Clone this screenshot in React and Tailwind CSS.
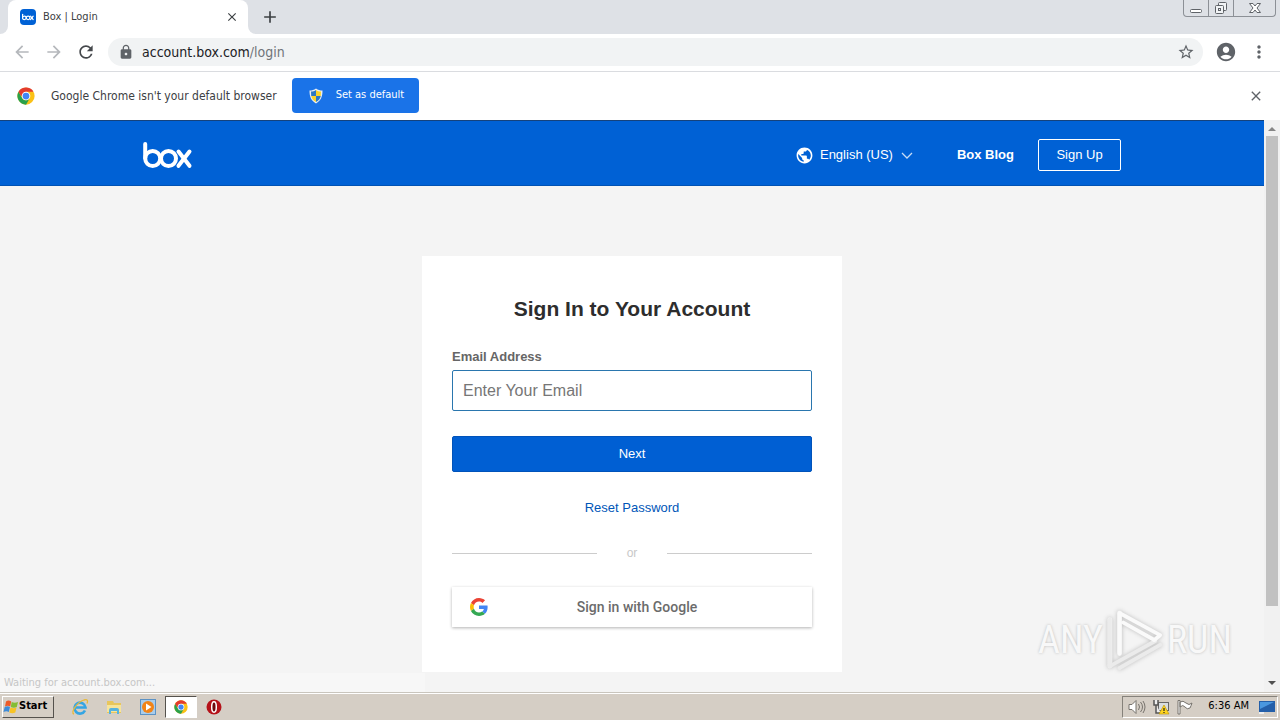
import React from "react";
import {
  MdArrowBack,
  MdArrowForward,
  MdRefresh,
  MdLock,
  MdStarBorder,
  MdAccountCircle,
  MdMoreVert,
  MdClose,
  MdAdd,
  MdPublic,
} from "react-icons/md";

function BoxMark({ className, width = 4 }) {
  return (
    <svg viewBox="0 0 50 28" className={className} fill="none" stroke="currentColor" strokeWidth={width} strokeLinecap="round" aria-label="box" role="img">
      <line x1="2.200" y1="3" x2="2.200" y2="17" />
      <circle cx="9.700" cy="17.500" r="7.500" />
      <circle cx="25.500" cy="17.500" r="7.500" />
      <line x1="35.500" y1="10.500" x2="46.500" y2="24.800" />
      <line x1="46.500" y1="10.500" x2="35.500" y2="24.800" />
    </svg>
  );
}

function ChromeIcon({ className }) {
  return (
    <svg viewBox="0 0 48 48" className={className} aria-hidden="true">
      <circle cx="24" cy="24" r="23" fill="#fbc116" />
      <path d="M4.100 12.500A23 23 0 0 1 43.900 12.500H24A11.500 11.500 0 0 0 14 18.300z" fill="#e33b2e" />
      <path d="M4.100 12.500A23 23 0 0 0 24 47L34 29.700A11.500 11.500 0 0 1 14 29.700z" fill="#2aa14b" />
      <path d="M4.100 12.500H24V24H10.700z" fill="#e33b2e" />
      <circle cx="24" cy="24" r="11.500" fill="#fff" />
      <circle cx="24" cy="24" r="9" fill="#4285f4" />
    </svg>
  );
}

function GoogleIcon({ className }) {
  return (
    <svg viewBox="0 0 48 48" className={className} aria-hidden="true">
      <path fill="#EA4335" d="M24 9.500c3.540 0 6.710 1.220 9.210 3.600l6.850-6.850C35.900 2.380 30.470 0 24 0 14.620 0 6.510 5.380 2.560 13.220l7.980 6.190C12.430 13.720 17.740 9.500 24 9.500z" />
      <path fill="#4285F4" d="M46.980 24.550c0-1.570-.15-3.090-.38-4.550H24v9.020h12.940c-.58 2.960-2.260 5.480-4.780 7.180l7.730 6c4.510-4.180 7.090-10.360 7.090-17.650z" />
      <path fill="#FBBC05" d="M10.530 28.590c-.48-1.450-.76-2.990-.76-4.590s.27-3.140.76-4.590l-7.980-6.190C.92 16.460 0 20.120 0 24c0 3.880.92 7.540 2.560 10.780l7.970-6.190z" />
      <path fill="#34A853" d="M24 48c6.480 0 11.930-2.130 15.890-5.810l-7.730-6c-2.150 1.450-4.920 2.300-8.160 2.300-6.260 0-11.570-4.220-13.470-9.910l-7.980 6.190C6.510 42.620 14.620 48 24 48z" />
    </svg>
  );
}

function ShieldIcon() {
  return (
    <svg viewBox="0 0 16 16" className="size-4" aria-hidden="true">
      <path d="M8 .5C6 2 4 2.500 1.500 2.500c0 6 1.500 10 6.500 13 5-3 6.500-7 6.500-13C12 2.500 10 2 8 .5z" fill="#e9eef2" />
      <path d="M8 2C6.500 3 5 3.500 3 3.600L3.200 8H8z" fill="#2b78c5" />
      <path d="M8 2c1.500 1 3 1.500 5 1.600L12.800 8H8z" fill="#f9d32c" />
      <path d="M3.200 8c.6 2.600 2 4.500 4.800 6V8z" fill="#f9d32c" />
      <path d="M12.800 8c-.6 2.600-2 4.500-4.800 6V8z" fill="#2b78c5" />
    </svg>
  );
}

function TabStrip() {
  return (
    <div className="flex h-[34px] shrink-0 items-start bg-[#dee1e6]">
      <div className="h-full w-2 bg-white">
        <div className="h-full rounded-br-lg bg-[#dee1e6]" />
      </div>
      <div className="flex h-full w-60 items-center rounded-t-lg bg-white pr-2 pl-3">
        <span className="flex size-4 items-center justify-center rounded-sm bg-[#0061d5] text-white">
          <BoxMark className="h-2 w-3" width={5} />
        </span>
        <span className="ml-[7px] flex-1 text-[11px] text-[#3c4043]">Box | Login</span>
        <button aria-label="Close tab" className="flex size-4 items-center justify-center text-[#3c4043]">
          <MdClose className="size-3.5" />
        </button>
      </div>
      <div className="h-full w-2 bg-white">
        <div className="h-full rounded-bl-lg bg-[#dee1e6]" />
      </div>
      <button aria-label="New tab" className="flex h-full w-7 items-center justify-center text-[#3c4043]">
        <MdAdd className="size-5" />
      </button>
      <div className="mr-1 ml-auto flex h-[17px] divide-x divide-[#8c9096] rounded-b border border-t-0 border-[#8c9096] text-[#5f6368]">
        <button aria-label="Minimize" className="flex w-[25px] items-center justify-center">
          <svg viewBox="0 0 14 14" className="size-3.5" fill="#fff" stroke="currentColor" aria-hidden="true">
            <rect x="1.500" y="8.500" width="11" height="3" rx="1" />
          </svg>
        </button>
        <button aria-label="Restore" className="flex w-[25px] items-center justify-center">
          <svg viewBox="0 0 14 14" className="size-3.5" fill="#f1f3f5" stroke="currentColor" aria-hidden="true">
            <rect x="4.500" y="1.500" width="8" height="8" rx="1" />
            <rect x="1.500" y="4.500" width="8" height="8" rx="1" />
            <rect x="4.500" y="7.500" width="2" height="2" />
          </svg>
        </button>
        <button aria-label="Close window" className="flex w-[41px] items-center justify-center">
          <svg viewBox="0 0 14 14" className="size-3.5" fill="#fff" stroke="currentColor" aria-hidden="true">
            <path d="M1.500 2.500h3.500L7 5 9 2.500h3.500L9 7l3.500 4.500H9L7 9l-2 2.500H1.500L5 7z" />
          </svg>
        </button>
      </div>
    </div>
  );
}

function Toolbar() {
  return (
    <div className="flex h-[38px] shrink-0 items-center border-b border-[#dadce0] bg-white pr-[11px] pb-0.5 pl-3">
      <div className="flex items-center gap-3">
        <button aria-label="Back" className="text-[#b5b8bc]"><MdArrowBack className="size-5" /></button>
        <button aria-label="Forward" className="text-[#b5b8bc]"><MdArrowForward className="size-5" /></button>
        <button aria-label="Reload" className="text-[#45484c]"><MdRefresh className="size-5" /></button>
      </div>
      <div className="ml-3 flex h-7 flex-1 items-center rounded-full bg-[#f1f3f4] pr-2 pl-2.5">
        <MdLock className="size-4 text-[#5f6368]" />
        <span className="ml-2 flex-1 text-sm text-[#202124]">
          account.box.com<span className="text-[#70757a]">/login</span>
        </span>
        <button aria-label="Bookmark this page" className="text-[#5f6368]"><MdStarBorder className="size-[18px]" /></button>
      </div>
      <button aria-label="Profile" className="ml-3 text-[#5f6368]"><MdAccountCircle className="size-[22px]" /></button>
      <button aria-label="Menu" className="ml-3 text-[#5f6368]"><MdMoreVert className="size-5" /></button>
    </div>
  );
}

function DefaultBrowserBar() {
  return (
    <div className="flex h-12 shrink-0 items-center bg-white pr-4 pb-px pl-[17px]">
      <ChromeIcon className="size-[18px]" />
      <span className="ml-4 text-xs text-[#3c4043]">Google Chrome isn't your default browser</span>
      <button className="ml-[15px] flex h-[35px] w-[127px] items-center gap-3 rounded bg-[#1a73e8] pl-4 text-[11px] whitespace-nowrap text-white">
        <ShieldIcon />
        Set as default
      </button>
      <button aria-label="Dismiss" className="ml-auto text-[#5f6368]"><MdClose className="size-4" /></button>
    </div>
  );
}

function SiteHeader() {
  return (
    <header className="h-[66px] shrink-0 border-t border-b border-t-[#15427c] border-b-[#0052b4] bg-[#0061d5] font-['Liberation_Sans',Arial,sans-serif] text-[13px] text-white">
      <div className="mx-auto flex h-full max-w-[978px] items-center pt-1">
        <a href="#home" aria-label="Box home"><BoxMark className="h-7 w-[50px]" /></a>
        <button className="ml-auto flex items-center">
          <MdPublic className="mr-1.5 size-[19px]" />
          English (US)
          <svg viewBox="0 0 12 12" className="ml-2 size-3" fill="none" stroke="#c7dcf5" strokeWidth="1.300" aria-hidden="true">
            <path d="M1 4l5 5 5-5" />
          </svg>
        </button>
        <a href="#blog" className="ml-11 font-bold">Box Blog</a>
        <a href="#signup" className="ml-6 flex h-8 w-[83px] items-center justify-center rounded-xs border border-white">Sign Up</a>
      </div>
    </header>
  );
}

function SignInCard() {
  return (
    <main className="mx-auto mt-[70px] flex h-[416px] w-[420px] flex-col bg-white px-[30px] pt-[39px] font-['Liberation_Sans',Arial,sans-serif]">
      <h1 className="text-center text-[21px] leading-7 font-bold text-[#2d2d2d]">Sign In to Your Account</h1>
      <form className="flex flex-col" onSubmit={(e) => e.preventDefault()}>
        <label htmlFor="email" className="mt-6 text-[13px] leading-5 font-bold text-[#666]">Email Address</label>
        <input id="email" type="email" placeholder="Enter Your Email" className="mt-[3px] h-[41px] rounded-xs border border-[#2a76ae] px-2.5 text-base text-[#333] outline-none placeholder:text-[#767676]" />
        <button className="mt-[25px] h-9 rounded-xs border border-[#0053ba] bg-[#005fd3] text-[13px] text-white">Next</button>
      </form>
      <a href="#reset" className="mt-[26px] self-center text-[13px] leading-5 text-[#0056b8]">Reset Password</a>
      <div className="mt-[25px] flex items-center text-xs leading-5 text-[#c8c8c8]">
        <span className="h-px flex-1 bg-[#ccc]" />
        <span className="w-[70px] text-center">or</span>
        <span className="h-px flex-1 bg-[#ccc]" />
      </div>
      <button className="mt-6 flex h-10 items-center bg-white px-[18px] font-['Roboto',sans-serif] text-sm font-medium text-[#6b6b6b] shadow-[0_1px_3px_rgba(0,0,0,0.3)]">
        <GoogleIcon className="size-[18px]" />
        <span className="flex-1 pr-2 text-center">Sign in with Google</span>
      </button>
    </main>
  );
}

function Watermark() {
  return (
    <div aria-hidden="true" className="absolute right-12 bottom-5 flex h-16 items-center gap-[3px] font-['Roboto_Condensed','Roboto',sans-serif] text-[38px] leading-none text-[#f8f8f8] [text-shadow:0_0_3px_#bbb]">
      <span>ANY</span>
      <svg viewBox="0 0 60 66" className="h-16 w-[58px] drop-shadow-[0_0_2px_#bbb]" fill="none" strokeLinejoin="round" strokeLinecap="round">
        <path d="M4 12v48M14 5v42" stroke="#f2f2f2" strokeWidth="5" />
        <path d="M4 12v48l47-26M14 62l42-24" stroke="#ebebeb" strokeWidth="4" />
        <path d="M14 47V5l42 23L50 33 18 15" stroke="#fafafa" strokeWidth="4" />
      </svg>
      <span>RUN</span>
    </div>
  );
}

function Scrollbar() {
  return (
    <div className="flex w-4 shrink-0 flex-col items-center bg-[#f1f1f1]" aria-hidden="true">
      <svg viewBox="0 0 16 16" className="h-4 w-4 shrink-0" fill="#858585"><path d="M4 11l4-4 4 4z" /></svg>
      <div className="w-3 grow-[47] bg-[#c1c1c1]" />
      <div className="grow-[7]" />
      <svg viewBox="0 0 16 16" className="h-4 w-4 shrink-0" fill="#505050"><path d="M4 5h8l-4 4z" /></svg>
    </div>
  );
}

function StartFlag() {
  return (
    <svg viewBox="0 0 16 16" className="size-4" aria-hidden="true">
      <path d="M3 2.500c2-1.500 3.500-1 5.200 0L7.200 7.500C5.500 6.500 4 6.500 2 7.500z" fill="#ec5a28" />
      <path d="M8.700 3c2 1 4 1 6.300 0l-1.200 5c-2 1-4 1-6 0z" fill="#84bd35" />
      <path d="M1.700 8c2-1 3.700-1 5.300 0l-1.200 5c-1.500-1-3.300-1-5.300 0z" fill="#3d8bd8" />
      <path d="M7.500 8.500c2 1 4 1 6 0l-1.200 5c-2 1-4 1-6 0z" fill="#f7c325" />
    </svg>
  );
}

function Taskbar() {
  return (
    <footer className="flex h-7 shrink-0 items-center border-t border-[#c9c5bd] bg-[#d5cec5] px-0.5 shadow-[inset_0_1px_0_#fff]">
      <button className="flex h-[22px] w-[52px] items-center border border-t-white border-r-[#55524d] border-b-[#55524d] border-l-white text-[11px] font-bold text-black">
        <StartFlag />
        Start
      </button>
      <div className="ml-[9px] flex items-center">
        <button aria-label="Internet Explorer" className="flex w-[34px] justify-center">
          <svg viewBox="0 0 18 18" className="size-[18px]" fill="none" aria-hidden="true">
            <path d="M14 12.500A5.500 5.500 0 1 1 14.500 9.500H5" stroke="#35a5e3" strokeWidth="2.600" />
            <path d="M3 16C-1 15 6 4 13 2c4-1 4 1 3 3.500" stroke="#e8b93a" strokeWidth="1.300" />
          </svg>
        </button>
        <button aria-label="File Explorer" className="flex w-[34px] justify-center">
          <svg viewBox="0 0 18 18" className="size-[18px]" aria-hidden="true">
            <path d="M2 3h6l1 2h7v10H2z" fill="#e8c65c" />
            <path d="M2 7h14v7H2z" fill="#f7e49a" />
            <path d="M4 16v-4q0-2 2-2h6q2 0 2 2v4h-2v-3H6v3z" fill="#57b3df" />
          </svg>
        </button>
        <button aria-label="Media Player" className="flex w-[34px] justify-center">
          <svg viewBox="0 0 18 18" className="size-[18px]" aria-hidden="true">
            <rect x="1.500" y="1.500" width="15" height="15" fill="#a9cdec" stroke="#5c92c4" />
            <circle cx="9" cy="9" r="6" fill="#f28418" />
            <path d="M7 5.500l5.500 3.500L7 12.500z" fill="#fff" />
          </svg>
        </button>
        <button aria-label="Chrome" className="flex h-[22px] w-8 items-center justify-center border border-t-[#55524d] border-r-white border-b-white border-l-[#55524d] bg-white">
          <ChromeIcon className="size-3.5" />
        </button>
        <button aria-label="Opera" className="flex w-[34px] justify-center">
          <svg viewBox="0 0 18 18" className="size-[18px]" aria-hidden="true">
            <circle cx="9" cy="9" r="7.500" fill="#b51219" />
            <ellipse cx="9" cy="9" rx="2.300" ry="5.200" fill="#6d0b0e" stroke="#fff" strokeWidth="1.500" />
          </svg>
        </button>
      </div>
      <div className="ml-auto flex h-[22px] items-center border border-t-[#85817a] border-r-white border-b-white border-l-[#85817a] pl-[5px] text-[11px] text-black">
        <svg viewBox="0 0 18 16" className="h-4 w-[18px]" fill="#fff" stroke="#77736d" aria-hidden="true">
          <path d="M1 5.500h3l4-4v13l-4-4H1z" />
          <path d="M10.500 5q2 3 0 6M12.500 3q4 5 0 10M15 2q4 6 0 12" fill="none" />
        </svg>
        <svg viewBox="0 0 18 16" className="ml-1.5 h-4 w-[18px]" aria-hidden="true">
          <rect x="6.500" y="3.500" width="10" height="8" fill="#d9dde0" stroke="#666" />
          <path d="M2 1v5h4V1M4 6v8h5" stroke="#555" strokeWidth="1.500" fill="#eee" />
          <path d="M12 6l5 9H7z" fill="#ffd51e" stroke="#b99000" strokeWidth=".6" />
          <path d="M12 9v3M12 13v1" stroke="#222" strokeWidth="1.200" />
        </svg>
        <svg viewBox="0 0 18 16" className="ml-1.5 h-4 w-[18px]" fill="#fff" stroke="#77736d" aria-hidden="true">
          <path d="M2 1.500h2V15H2zM4 3q3-2 6 1t6 0q-1 3-2 5-3 2-5-1t-5 0z" />
        </svg>
        <span className="ml-3.5">6:36 AM</span>
        <svg viewBox="0 0 16 16" className="mr-0.5 ml-2.5 size-4" aria-hidden="true">
          <rect x="0" y="2" width="16" height="11" fill="#245fa9" />
          <path d="M1 3h14L1 10z" fill="#4a97df" />
          <path d="M0 13h5v2H0z" fill="#eee" />
        </svg>
      </div>
    </footer>
  );
}

export default function App() {
  return (
    <div className="flex h-screen flex-col overflow-hidden bg-[#f4f4f4] font-['DejaVu_Sans_Condensed','Noto_Sans',sans-serif]">
      <TabStrip />
      <Toolbar />
      <DefaultBrowserBar />
      <div className="relative flex min-h-0 flex-1">
        <div className="flex min-w-0 flex-1 flex-col">
          <SiteHeader />
          <SignInCard />
        </div>
        <Scrollbar />
        <div className="absolute bottom-0 left-0 h-[19px] w-[425px] bg-[#f7f7f7] pl-1 text-[11px] leading-5 text-[#c6c6c6]">Waiting for account.box.com...</div>
        <Watermark />
      </div>
      <Taskbar />
    </div>
  );
}
